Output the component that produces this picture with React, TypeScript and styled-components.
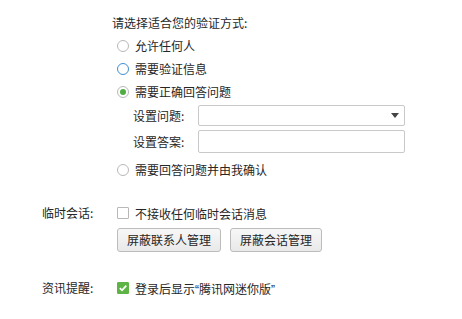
import React from "react";
import styled, { createGlobalStyle } from "styled-components";

const Global = createGlobalStyle`
  html, body { margin: 0; padding: 0; background: #ffffff; }
  body {
    font-family: "Noto Sans CJK SC", "Microsoft YaHei", sans-serif;
    font-size: 12px;
    color: #262626;
  }
`;

const Page = styled.div`
  width: 462px;
  height: 319px;
  background: #fff;
  overflow: hidden;
  padding-top: 12px;
  box-sizing: border-box;
`;

const VerifySection = styled.section`
  margin-left: 112px;
  display: flex;
  flex-direction: column;
`;

const Title = styled.div`
  height: 22px;
  line-height: 22px;
`;

const OptionList = styled.div`
  padding-left: 5px;
  display: flex;
  flex-direction: column;
`;

const OptionRow = styled.label<{ $gapTop?: number }>`
  display: flex;
  align-items: center;
  gap: 6px;
  height: 23px;
  margin-top: ${(p) => p.$gapTop ?? 0}px;
`;

const RadioCircle = styled.span<{ $hover?: boolean; $checked?: boolean }>`
  width: 12px;
  height: 12px;
  box-sizing: border-box;
  border-radius: 50%;
  border: 1px solid ${(p) => (p.$hover ? "#3d8fd5" : "#b8b8b8")};
  background: #fff;
  display: flex;
  align-items: center;
  justify-content: center;
  flex-shrink: 0;
  &::after {
    content: "";
    display: ${(p) => (p.$checked ? "block" : "none")};
    width: 6px;
    height: 6px;
    border-radius: 50%;
    background: #4fae3f;
  }
`;

const Fields = styled.div`
  padding-left: 16px;
  margin-top: 2px;
  display: flex;
  flex-direction: column;
  gap: 4px;
`;

const FieldRow = styled.div`
  display: flex;
  align-items: center;
`;

const FieldLabel = styled.span`
  width: 65px;
  flex-shrink: 0;
`;

const Box = styled.div<{ $h: number }>`
  width: 207px;
  height: ${(p) => p.$h}px;
  box-sizing: border-box;
  border: 1px solid #c9c9c9;
  border-radius: 2px;
  background: #fff;
  display: flex;
  align-items: center;
  justify-content: flex-end;
  padding-right: 5px;
`;

const Arrow = styled.span`
  width: 0;
  height: 0;
  border-left: 4.5px solid transparent;
  border-right: 4.5px solid transparent;
  border-top: 5px solid #444;
`;

const SettingGrid = styled.div`
  display: grid;
  grid-template-columns: 75px auto;
  padding-left: 42px;
  align-items: start;
`;

const SettingLabel = styled.div`
  height: 14px;
  line-height: 14px;
`;

const SettingBody = styled.div`
  display: flex;
  flex-direction: column;
  gap: 8px;
`;

const CheckRow = styled.label`
  display: flex;
  align-items: center;
  gap: 6px;
  height: 14px;
`;

const CheckBox = styled.span<{ $checked?: boolean }>`
  width: 12px;
  height: 12px;
  box-sizing: border-box;
  border: 1px solid ${(p) => (p.$checked ? "#5db445" : "#b8b8b8")};
  background: ${(p) => (p.$checked ? "#5db445" : "#fff")};
  border-radius: 1px;
  display: flex;
  align-items: center;
  justify-content: center;
  flex-shrink: 0;
`;

const ButtonRow = styled.div`
  display: flex;
  gap: 9px;
`;

const Button = styled.button`
  height: 24px;
  padding: 0 9px;
  border: 1px solid #bcbcbc;
  border-radius: 3px;
  background: linear-gradient(#f7f7f7, #e9e9e9);
  font-family: "Noto Sans CJK SC", sans-serif;
  font-size: 12px;
  color: #262626;
  line-height: 22px;
  cursor: pointer;
`;

const Quote = styled.span`
  font-family: "Liberation Sans", sans-serif;
`;

const Spacer = styled.div<{ $h: number }>`
  height: ${(p) => p.$h}px;
`;

export default function App() {
  return (
    <>
      <Global />
      <Page>
        <VerifySection>
          <Title>请选择适合您的验证方式:</Title>
          <OptionList>
            <OptionRow>
              <RadioCircle />
              允许任何人
            </OptionRow>
            <OptionRow>
              <RadioCircle $hover />
              需要验证信息
            </OptionRow>
            <OptionRow>
              <RadioCircle $checked />
              需要正确回答问题
            </OptionRow>
            <Fields>
              <FieldRow>
                <FieldLabel>设置问题:</FieldLabel>
                <Box $h={21}>
                  <Arrow />
                </Box>
              </FieldRow>
              <FieldRow>
                <FieldLabel>设置答案:</FieldLabel>
                <Box $h={23} />
              </FieldRow>
            </Fields>
            <OptionRow $gapTop={5}>
              <RadioCircle />
              需要回答问题并由我确认
            </OptionRow>
          </OptionList>
        </VerifySection>
        <Spacer $h={25} />
        <SettingGrid>
          <SettingLabel>临时会话:</SettingLabel>
          <SettingBody>
            <CheckRow>
              <CheckBox />
              不接收任何临时会话消息
            </CheckRow>
            <ButtonRow>
              <Button>屏蔽联系人管理</Button>
              <Button>屏蔽会话管理</Button>
            </ButtonRow>
          </SettingBody>
        </SettingGrid>
        <Spacer $h={29} />
        <SettingGrid>
          <SettingLabel>资讯提醒:</SettingLabel>
          <CheckRow>
            <CheckBox $checked>
              <svg width="10" height="10" viewBox="0 0 10 10">
                <path d="M1.8 5.2 L4 7.3 L8.3 2.6" fill="none" stroke="#fff" strokeWidth="1.7" />
              </svg>
            </CheckBox>
            <span>
              登录后显示<Quote>“</Quote>腾讯网迷你版<Quote>”</Quote>
            </span>
          </CheckRow>
        </SettingGrid>
      </Page>
    </>
  );
}
